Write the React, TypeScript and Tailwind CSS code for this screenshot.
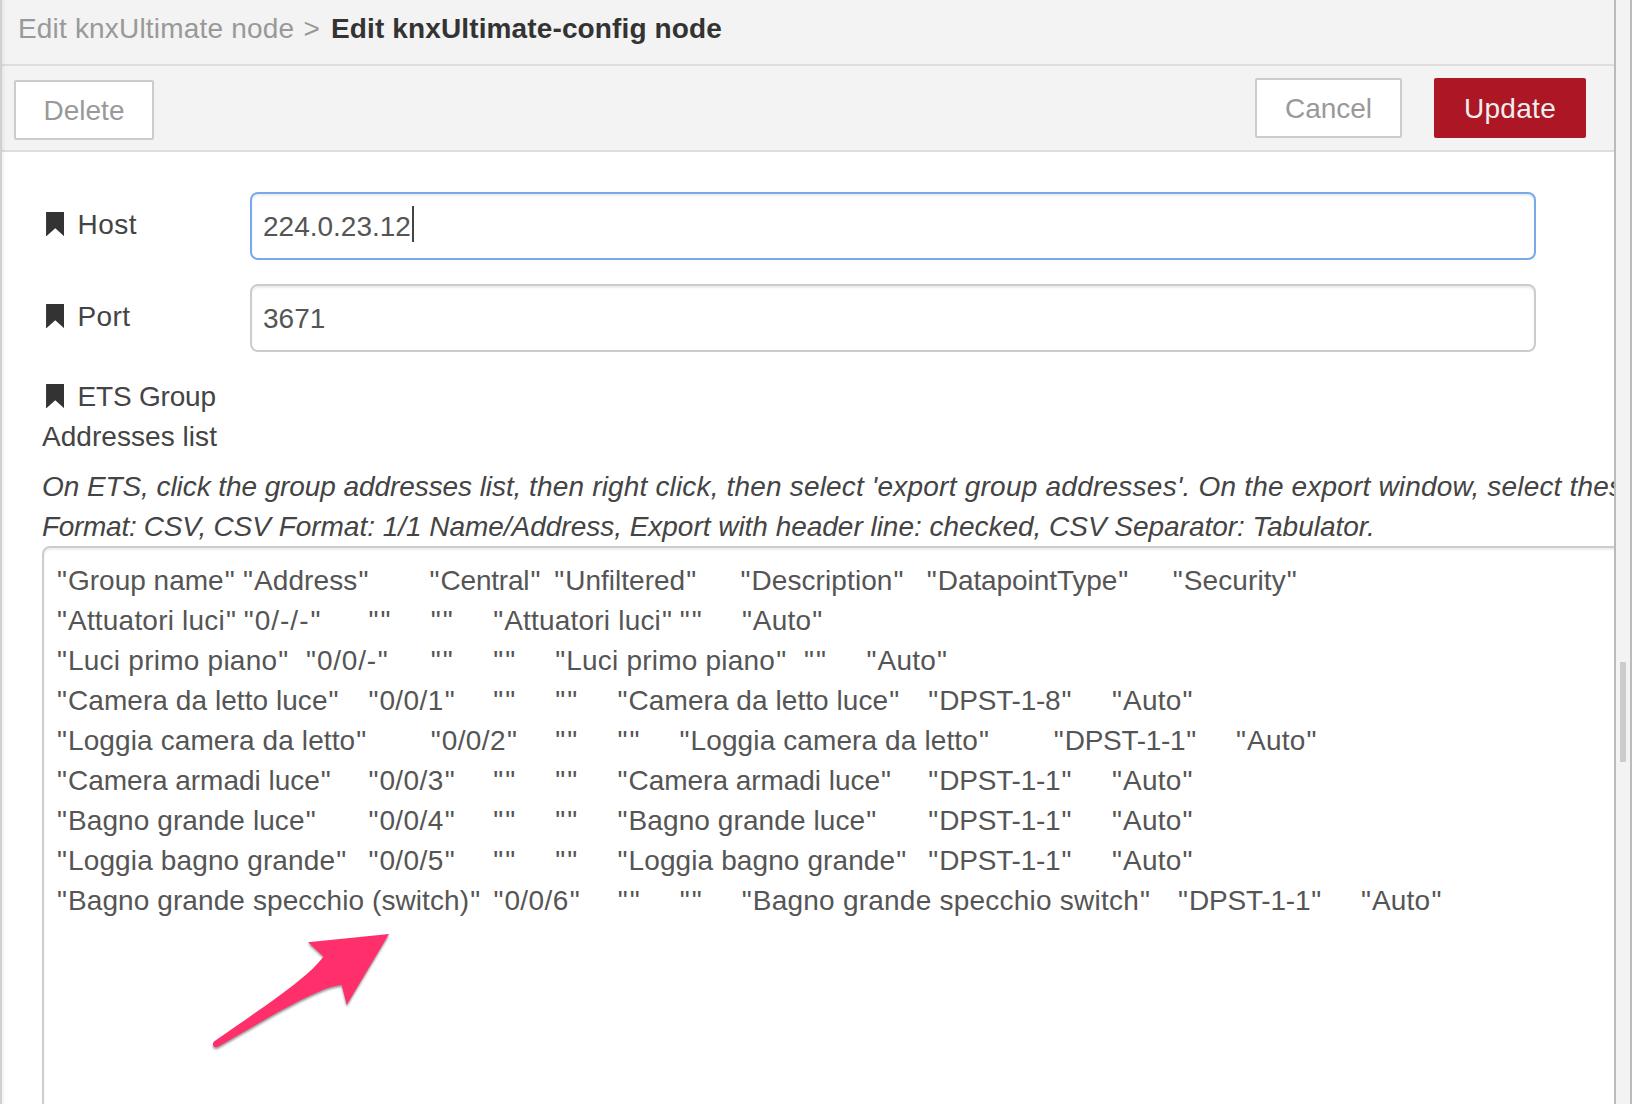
type Cell = { x: number; text: string; tracking: number };

const cell = (x: number, text: string, tracking = 0): Cell => ({ x, text, tracking });

// x is the left edge of a cell, measured from the left edge of the row
const rows: Cell[][] = [
  [cell(0, 'Group name'), cell(186, 'Address', 0.1), cell(372.5, 'Central', -0.2), cell(497.3, 'Unfiltered'), cell(683.4, 'Description', 0.1), cell(869.8, 'DatapointType', -0.08), cell(1115.8, 'Security', 0.1)],
  [cell(0, 'Attuatori luci', 0.2), cell(186.7, '0/-/-', 1), cell(311.5, ''), cell(373.7, ''), cell(436.2, 'Attuatori luci', 0.2), cell(622.8, ''), cell(684.9, 'Auto', 0.2)],
  [cell(0, 'Luci primo piano', 0.24), cell(249, '0/0/-', 0.75), cell(373.7, ''), cell(436.2, ''), cell(498.2, 'Luci primo piano', 0.22), cell(746.9, ''), cell(809.6, 'Auto', 0.2)],
  [cell(0, 'Camera da letto luce', 0.06), cell(311.4, '0/0/1', 0.4), cell(436.2, ''), cell(498.2, ''), cell(560.6, 'Camera da letto luce', 0.06), cell(871.2, 'DPST-1-8', -0.2), cell(1055.1, 'Auto', 0.2)],
  [cell(0, 'Loggia camera da letto', 0.11), cell(373.7, '0/0/2', 0.4), cell(498.2, ''), cell(560.6, ''), cell(622.6, 'Loggia camera da letto', 0.11), cell(996.8, 'DPST-1-1', -0.3), cell(1179.1, 'Auto', 0.2)],
  [cell(0, 'Camera armadi luce', -0.02), cell(311.4, '0/0/3', 0.4), cell(436.2, ''), cell(498.2, ''), cell(560.6, 'Camera armadi luce', -0.04), cell(871.2, 'DPST-1-1', -0.2), cell(1055.1, 'Auto', 0.2)],
  [cell(0, 'Bagno grande luce', 0.09), cell(311.4, '0/0/4', 0.4), cell(436.2, ''), cell(498.2, ''), cell(560.6, 'Bagno grande luce', 0.09), cell(871.2, 'DPST-1-1', -0.2), cell(1055.1, 'Auto', 0.2)],
  [cell(0, 'Loggia bagno grande', 0.13), cell(311.4, '0/0/5', 0.4), cell(436.2, ''), cell(498.2, ''), cell(560.6, 'Loggia bagno grande', 0.1), cell(871.2, 'DPST-1-1', -0.2), cell(1055.1, 'Auto', 0.2)],
  [cell(0, 'Bagno grande specchio (switch)', 0.09), cell(436.4, '0/0/6', 0.4), cell(560.8, ''), cell(622.8, ''), cell(684.8, 'Bagno grande specchio switch', 0.23), cell(1121, 'DPST-1-1', -0.2), cell(1304, 'Auto', 0.2)],
];

function Quote() {
  return <span className="inline-block w-[12px] text-center">"</span>;
}

function CsvRow({ cells }: { cells: Cell[] }) {
  return (
    <div className="flex h-10">
      {cells.map((c, i) => (
        <span
          key={i}
          className="shrink-0"
          style={{ width: i + 1 < cells.length ? cells[i + 1].x - c.x : undefined }}
        >
          <Quote />
          <span style={{ letterSpacing: c.tracking }}>{c.text}</span>
          <Quote />
        </span>
      ))}
    </div>
  );
}

function Bookmark() {
  return (
    <svg className="mr-[13.5px] ml-[3.5px] inline-block align-[-2px]" width="18.500" height="24.500" viewBox="0 0 18 24">
      <path d="M0 0H18V24L9 16L0 24Z" fill="#333" />
    </svg>
  );
}

export default function App() {
  return (
    <div className="flex h-[1104px] w-[1632px] overflow-hidden bg-[#f3f3f3] font-['Liberation_Sans',Arial,sans-serif] text-[28px] leading-10 whitespace-nowrap text-[#444]">
      <div className="w-[2px] shrink-0 bg-[#d0d0d0]" />
      <div className="relative flex w-[1612px] shrink-0 flex-col overflow-hidden bg-white">
        <div className="h-[66px] shrink-0 border-b-2 border-[#ddd] bg-[#f3f3f3] pt-[9px] pl-[16px] text-[#999]">
          <span className="inline-block w-[285.5px] tracking-[0.18px]">Edit knxUltimate node</span>
          <span className="inline-block w-[27.5px]">&gt;</span>
          <span className="font-bold tracking-[0.13px] text-[#333]">Edit knxUltimate-config node</span>
        </div>

        <div className="flex h-[86px] shrink-0 items-start border-b-2 border-[#ddd] bg-[#f3f3f3] pr-[28px] pl-[12px] text-[#999]">
          <button className="mt-[14px] h-[60px] w-[140px] rounded-[2px] border-2 border-[#ccc] bg-white pt-[1px] text-center">
            Delete
          </button>
          <button className="mt-[12px] mr-[32px] ml-auto h-[60px] w-[147px] rounded-[2px] border-2 border-[#ccc] bg-white pt-[1px] text-center">
            Cancel
          </button>
          <button className="mt-[12px] h-[60px] w-[152px] rounded-[2px] bg-[#ad1625] pt-[1px] text-center tracking-[0.3px] text-[#eee]">
            Update
          </button>
        </div>

        <div className="flex h-[92px] shrink-0 pl-[40px]">
          <div className="w-[208px] pt-[53px] tracking-[0.5px]"><Bookmark />Host</div>
          <div className="mt-[40px] flex h-[68px] w-[1286px] shrink-0 items-center rounded-[8px] border-2 border-[#78a9ea] pt-[2px] pl-[11px] text-[#555] shadow-[inset_0_2px_2px_rgba(0,0,0,0.075)]">
            224.0.23.12
            <span className="mb-[6px] ml-[1px] h-[36px] w-[2px] bg-[#444]" />
          </div>
        </div>
        <div className="mt-[16px] flex h-[92px] shrink-0 pl-[40px]">
          <div className="w-[208px] pt-[37px] tracking-[0.4px]"><Bookmark />Port</div>
          <div className="mt-[24px] flex h-[68px] w-[1286px] shrink-0 items-center rounded-[8px] border-2 border-[#ccc] pt-[2px] pl-[11px] text-[#555] shadow-[inset_0_2px_2px_rgba(0,0,0,0.075)]">
            3671
          </div>
        </div>

        <div className="mt-[25px] pl-[40px]">
          <div className="h-10 tracking-[-0.2px]"><Bookmark />ETS Group</div>
          <div className="h-10 tracking-[0.05px]">Addresses list</div>
          <div className="mt-[10px] h-10 italic">
            <span className="tracking-[-0.08px]">On ETS, click the group addresses list, </span>
            <span className="tracking-[0.17px]">then right click, then select </span>
            <span className="tracking-[0.24px]">'export group addresses'. </span>
            <span className="tracking-[0.18px]">On the export window, select these</span>
          </div>
          <div className="h-[39px] italic">
            <span className="tracking-[-0.3px]">Format: CSV, </span>
            <span className="tracking-[-0.025px]">CSV Format: 1/1 Name/Address, Export with header line: checked, CSV Separator: Tabulator.</span>
          </div>
          <div className="h-[640px] w-[1640px] rounded-[8px] border-2 border-[#ccc] pt-[13px] pl-[12px] text-[#555] shadow-[inset_0_2px_2px_rgba(0,0,0,0.075)]">
            {rows.map((cells, i) => (
              <CsvRow key={i} cells={cells} />
            ))}
          </div>
        </div>

        <div className="absolute inset-y-0 left-0 w-[4px] bg-gradient-to-r from-black/5 to-transparent" />
        <svg
          className="absolute top-[920px] left-[198px] drop-shadow-[0_2px_1px_rgba(0,0,0,0.4)]"
          width="200"
          height="140"
          viewBox="200 920 200 140"
        >
          <path
            d="M389 934L308 942.3L323.5 956.5C309 976 280 996 214 1041.500C211.500 1044.500 213.500 1048.500 218 1046.800C268 1018 320 986 341.700 985L346.700 1005Z"
            fill="#ff2f6b"
          />
        </svg>
      </div>
      <div className="flex w-[18px] shrink-0 items-start border-x-2 border-[#bbb] pl-[4px]">
        <div className="mt-[662px] h-[100px] w-[6px] bg-[#ccc]" />
      </div>
    </div>
  );
}
